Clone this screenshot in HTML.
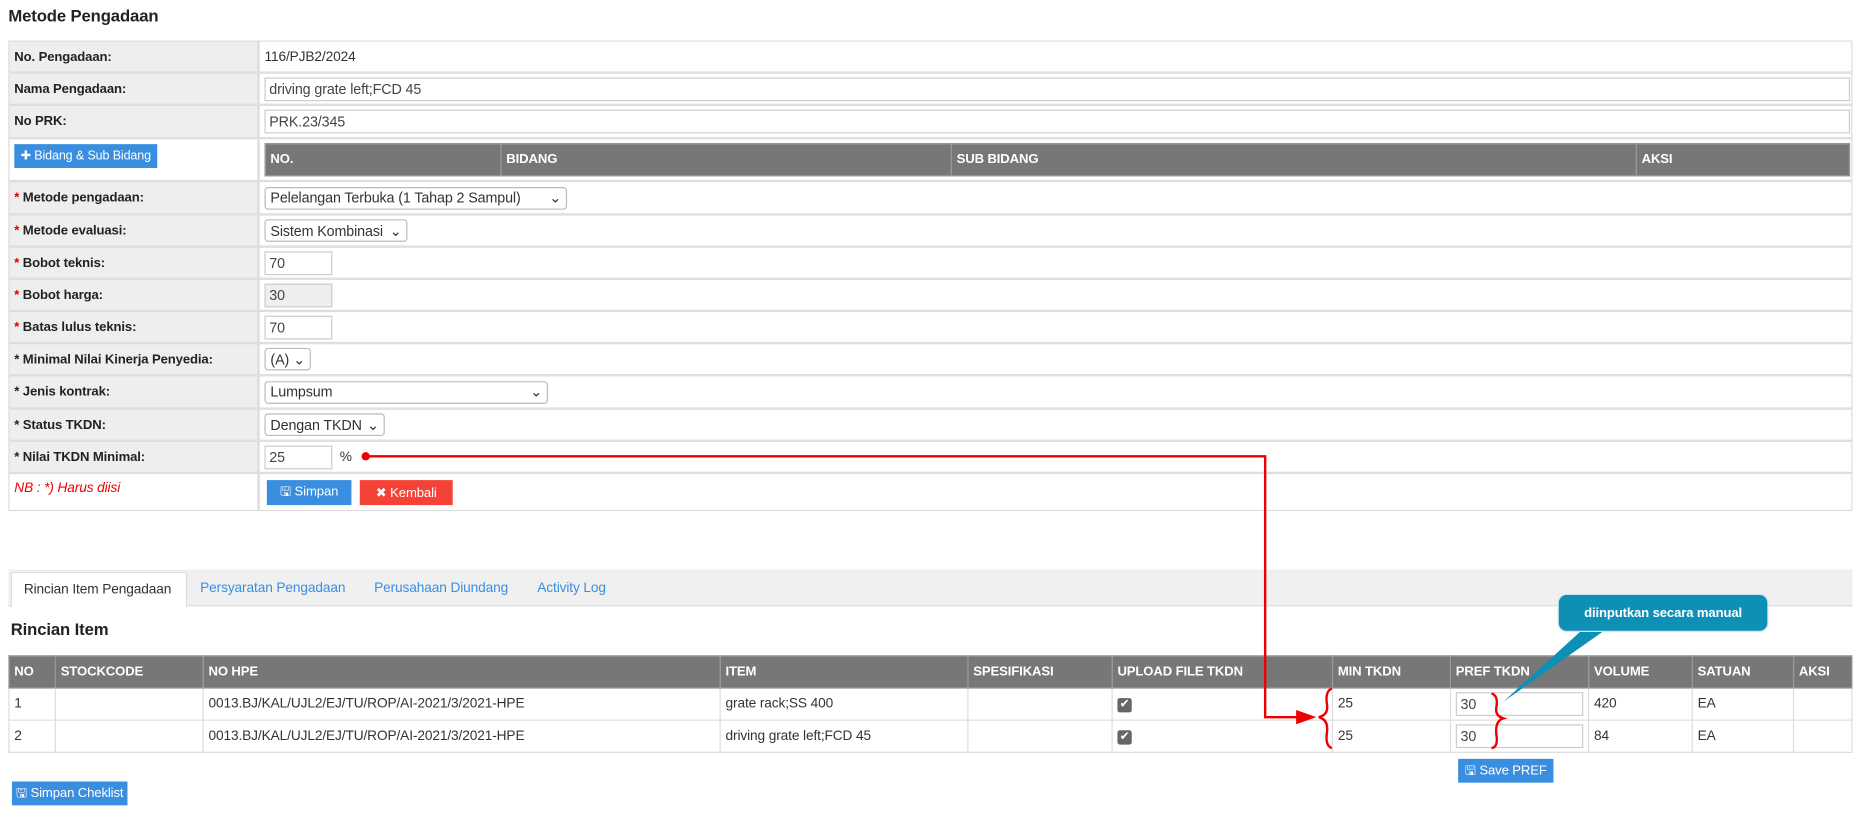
<!DOCTYPE html>
<html><head><meta charset="utf-8"><style>
*{box-sizing:border-box;margin:0;padding:0}
html,body{width:1868px;height:815px;overflow:hidden;background:#fff}
#w{position:absolute;left:0;top:0;width:1568px;height:684px;transform:scale(1.1913);transform-origin:0 0;font-family:"Liberation Sans",Arial,sans-serif;font-size:11.5px;color:#333;white-space:nowrap;letter-spacing:-0.1px}
.a{position:absolute}
.lab{position:absolute;left:7px;width:210px;background:#eee;border:1px solid #ddd;font-weight:bold;padding-left:4px;display:flex;align-items:center;color:#222;font-size:11px}
.val{position:absolute;left:217px;width:1338px;border:1px solid #ddd;display:flex;align-items:center;padding-left:4px}
.inp{border:1px solid #ccc;height:20px;display:flex;align-items:center;padding-left:3px;font-size:12px;color:#444;background:#fff}
.sel{border:1px solid #bbb;border-radius:3px;height:19px;display:flex;align-items:center;padding:0 4px;font-size:12px;color:#333;justify-content:space-between;background:#fff}
.req{color:#d00}
.btn{position:absolute;color:#fff;display:flex;align-items:center;justify-content:center;font-size:11px}
th{background:#777;color:#fff;text-align:left;font-size:11px;padding:0 4px;height:27px;border:1px solid #999;font-weight:bold}
td{border:1px solid #ddd;padding:0 4px;height:27px;font-size:11.5px}
table{border-collapse:collapse}
.cb{display:inline-block;width:12px;height:12px;background:#666;border-radius:2px;color:#fff;font-size:10px;line-height:12px;text-align:center}
</style></head><body><div id="w">
<div class="a" style="left:7px;top:5px;font-size:14px;font-weight:bold;color:#222">Metode Pengadaan</div>

<div class="lab" style="top:34px;height:27px">No. Pengadaan:</div><div class="val" style="top:34px;height:27px">116/PJB2/2024</div>
<div class="lab" style="top:61px;height:27px">Nama Pengadaan:</div><div class="val" style="top:61px;height:27px"><div class="inp" style="width:1331px">driving grate left;FCD 45</div></div>
<div class="lab" style="top:88px;height:28px">No PRK:</div><div class="val" style="top:88px;height:28px"><div class="inp" style="width:1331px">PRK.23/345</div></div>
<div class="a" style="left:7px;top:116px;width:210px;height:36px;border:1px solid #ddd"></div>
<div class="btn" style="left:12px;top:121px;width:120px;height:20px;background:#3a8ee0;font-size:10.5px">✚ Bidang &amp; Sub Bidang</div>
<div class="val" style="top:116px;height:36px;align-items:flex-start;padding-top:3px">
<table style="width:1331px"><tr><th style="width:198px">NO.</th><th style="width:378px">BIDANG</th><th style="width:575px">SUB BIDANG</th><th>AKSI</th></tr></table></div>

<div class="lab" style="top:152px;height:28px"><span class="req">*</span>&nbsp;Metode pengadaan:</div><div class="val" style="top:152px;height:28px"><div class="sel" style="width:254px">Pelelangan Terbuka (1 Tahap 2 Sampul)<span>⌄</span></div></div>
<div class="lab" style="top:180px;height:27px"><span class="req">*</span>&nbsp;Metode evaluasi:</div><div class="val" style="top:180px;height:27px"><div class="sel" style="width:120px">Sistem Kombinasi<span>⌄</span></div></div>
<div class="lab" style="top:207px;height:27px"><span class="req">*</span>&nbsp;Bobot teknis:</div><div class="val" style="top:207px;height:27px"><div class="inp" style="width:57px">70</div></div>
<div class="lab" style="top:234px;height:27px"><span class="req">*</span>&nbsp;Bobot harga:</div><div class="val" style="top:234px;height:27px"><div class="inp" style="width:57px;background:#eee">30</div></div>
<div class="lab" style="top:261px;height:27px"><span class="req">*</span>&nbsp;Batas lulus teknis:</div><div class="val" style="top:261px;height:27px"><div class="inp" style="width:57px">70</div></div>
<div class="lab" style="top:288px;height:27px">*&nbsp;Minimal Nilai Kinerja Penyedia:</div><div class="val" style="top:288px;height:27px"><div class="sel" style="width:39px">(A)<span>⌄</span></div></div>
<div class="lab" style="top:315px;height:28px">*&nbsp;Jenis kontrak:</div><div class="val" style="top:315px;height:28px"><div class="sel" style="width:238px">Lumpsum<span>⌄</span></div></div>
<div class="lab" style="top:343px;height:27px">*&nbsp;Status TKDN:</div><div class="val" style="top:343px;height:27px"><div class="sel" style="width:101px">Dengan TKDN<span>⌄</span></div></div>
<div class="lab" style="top:370px;height:27px">*&nbsp;Nilai TKDN Minimal:</div><div class="val" style="top:370px;height:27px"><div class="inp" style="width:57px">25</div>&nbsp;&nbsp;%</div>
<div class="a" style="left:7px;top:397px;width:210px;height:32px;border:1px solid #ddd;color:#e00;font-style:italic;padding:6px 0 0 4px">NB : *) Harus diisi</div>
<div class="a" style="left:217px;top:397px;width:1338px;height:32px;border:1px solid #ddd"></div>
<div class="btn" style="left:224px;top:403px;width:71px;height:21px;background:#3a8ee0">🖫 Simpan</div>
<div class="btn" style="left:302px;top:403px;width:78px;height:21px;background:#f44336">✖ Kembali</div>

<div class="a" style="left:7px;top:478px;width:1548px;height:31px;background:#f0f0f0;border-bottom:1px solid #ddd"></div>
<div class="a" style="left:9px;top:480px;width:148px;height:30px;background:#fff;border:1px solid #ddd;border-bottom:none;border-radius:3px 3px 0 0;padding:8px 0 0 10px;color:#333">Rincian Item Pengadaan</div>
<div class="a" style="left:168px;top:488px;color:#3a8ee0">Persyaratan Pengadaan</div>
<div class="a" style="left:314px;top:488px;color:#3a8ee0">Perusahaan Diundang</div>
<div class="a" style="left:451px;top:488px;color:#3a8ee0">Activity Log</div>

<div class="a" style="left:9px;top:520px;font-size:14px;font-weight:bold;color:#222">Rincian Item</div>
<table class="a" style="left:7px;top:550px;width:1548px">
<tr><th style="width:39px">NO</th><th style="width:124px">STOCKCODE</th><th style="width:434px">NO HPE</th><th style="width:208px">ITEM</th><th style="width:121px">SPESIFIKASI</th><th style="width:185px">UPLOAD FILE TKDN</th><th style="width:99px">MIN TKDN</th><th style="width:114px">PREF TKDN</th><th style="width:87px">VOLUME</th><th style="width:85px">SATUAN</th><th>AKSI</th></tr>
<tr><td>1</td><td></td><td>0013.BJ/KAL/UJL2/EJ/TU/ROP/AI-2021/3/2021-HPE</td><td>grate rack;SS 400</td><td></td><td><span class="cb">✔</span></td><td>25</td><td><div class="inp" style="width:107px">30</div></td><td>420</td><td>EA</td><td></td></tr>
<tr><td>2</td><td></td><td>0013.BJ/KAL/UJL2/EJ/TU/ROP/AI-2021/3/2021-HPE</td><td>driving grate left;FCD 45</td><td></td><td><span class="cb">✔</span></td><td>25</td><td><div class="inp" style="width:107px">30</div></td><td>84</td><td>EA</td><td></td></tr>
</table>
<div class="btn" style="left:1224px;top:637px;width:80px;height:20px;background:#3a8ee0">🖫 Save PREF</div>
<div class="btn" style="left:10px;top:656px;width:97px;height:20px;background:#3a8ee0">🖫 Simpan Cheklist</div>

<svg class="a" style="left:0;top:0" width="1568" height="684">
<circle cx="307" cy="383" r="3.5" fill="#e00"/>
<polyline points="307,383 1062,383 1062,602 1090,602" fill="none" stroke="#e00" stroke-width="2"/>
<polygon points="1088,596 1105,602 1088,608" fill="#e00"/>
<path d="M1118,578 Q1112,580 1114,592 Q1115,600 1107,602 Q1115,604 1114,614 Q1112,626 1118,628" fill="none" stroke="#e00" stroke-width="2"/>
<path d="M1252,582 Q1258,584 1256,594 Q1255,601 1262,603 Q1255,605 1256,616 Q1258,627 1252,628" fill="none" stroke="#e00" stroke-width="2"/>
<polygon points="1262,589 1330,527 1350,527" fill="#0e8fb5"/>
<rect x="1308" y="499" width="176" height="31" rx="7" fill="#0e8fb5" stroke="#cfe8f0"/>
<text x="1396" y="518" text-anchor="middle" fill="#fff" font-family="Liberation Sans, Arial, sans-serif" font-size="11" font-weight="bold">diinputkan secara manual</text>
</svg>
</div></body></html>
